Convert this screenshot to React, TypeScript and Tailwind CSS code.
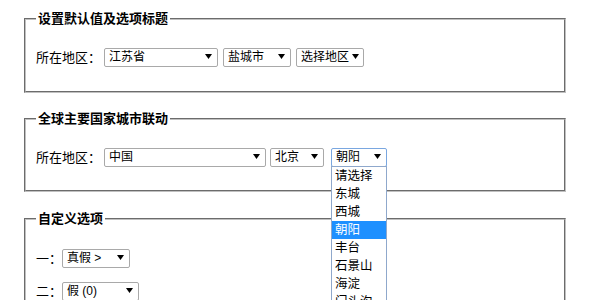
import React from 'react';

// fake native select box, drawn with divs so it looks the same everywhere
function FakeSelect({
  value,
  width,
  focused = false,
  children,
}: {
  value: string;
  width: string;
  focused?: boolean;
  children?: React.ReactNode;
}) {
  return (
    <div
      className={`relative inline-flex h-[19px] items-center justify-between rounded-[2px] border bg-white pl-[4px] pr-[5px] text-[12px] ${width} ${
        focused ? 'border-[#7aa7e0]' : 'border-[#a9a9a9]'
      }`}
    >
      <span className="whitespace-nowrap leading-[17px]">{value}</span>
      <svg width="7" height="5" viewBox="0 0 7 5" className="mb-[2px] ml-[3px] shrink-0">
        <polygon points="0,0 7,0 3.5,5" fill="#000" />
      </svg>
      {children}
    </div>
  );
}

const districts = ['请选择', '东城', '西城', '朝阳', '丰台', '石景山', '海淀', '门头沟'];

export default function App() {
  return (
    <div className="h-[300px] overflow-hidden bg-white px-[24px] pt-[11px] text-[13px] text-black font-['Liberation_Sans','Noto_Sans_CJK_SC',sans-serif]">
      {/* 默认值 */}
      <fieldset className="border-2 border-[#c0c0c0] px-[10px] pb-[24px] pt-[21px] [border-style:groove]">
        <legend className="px-[2px] text-[13px] font-bold leading-[16px]">设置默认值及选项标题</legend>
        <div className="flex items-center">
          <span className="mr-[3px] leading-[19px]">所在地区：</span>
          <FakeSelect value="江苏省" width="w-[114px]" />
          <div className="w-[5px]" />
          <FakeSelect value="盐城市" width="w-[68px]" />
          <div className="w-[5px]" />
          <FakeSelect value="选择地区" width="w-[68px]" />
        </div>
      </fieldset>

      {/* 全球城市 */}
      <fieldset className="mt-[18px] border-2 border-[#c0c0c0] px-[10px] pb-[23px] pt-[21px] [border-style:groove]">
        <legend className="px-[2px] text-[13px] font-bold leading-[16px]">全球主要国家城市联动</legend>
        <div className="flex items-center">
          <span className="mr-[3px] leading-[19px]">所在地区：</span>
          <FakeSelect value="中国" width="w-[162px]" />
          <div className="w-[4px]" />
          <FakeSelect value="北京" width="w-[54px]" />
          <div className="w-[7px]" />
          <FakeSelect value="朝阳" width="w-[56px]" focused>
            <ul className="absolute left-[-1px] top-[17px] z-10 w-[56px] border border-[#8fa8cc] bg-white text-[12.5px]">
              {districts.map((d) => (
                <li
                  key={d}
                  className={`h-[18px] whitespace-nowrap pl-[3px] leading-[18px] ${
                    d === '朝阳' ? 'bg-[#1e90ff] text-white' : ''
                  }`}
                >
                  {d}
                </li>
              ))}
            </ul>
          </FakeSelect>
        </div>
      </fieldset>

      {/* 自定义 */}
      <fieldset className="mt-[19px] border-2 border-[#c0c0c0] px-[10px] pb-[24px] pt-[22px] [border-style:groove]">
        <legend className="px-[2px] text-[13px] font-bold leading-[16px]">自定义选项</legend>
        <div className="flex items-center">
          <span className="leading-[19px]">一：</span>
          <FakeSelect value="真假 >" width="w-[68px]" />
        </div>
        <div className="mt-[14px] flex items-center">
          <span className="leading-[19px]">二：</span>
          <FakeSelect value="假 (0)" width="w-[77px]" />
        </div>
      </fieldset>
    </div>
  );
}
